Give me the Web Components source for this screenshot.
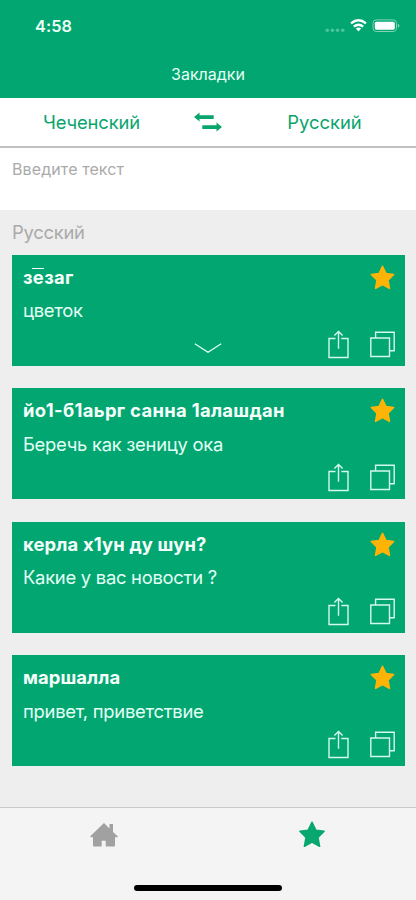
<!DOCTYPE html>
<html lang="ru">
<head>
<meta charset="utf-8">
<title>Закладки</title>
<style>
html,body{margin:0;height:100%}
body{font-family:Inter,"Noto Sans",sans-serif;background:#eee;overflow:hidden}
</style>
</head>
<body>
<bookmarks-app></bookmarks-app>
<script>
const define = (name, html) => {
  const t = document.createElement('template');
  t.innerHTML = html;
  customElements.define(name, class extends HTMLElement {
    constructor() {
      super();
      this.attachShadow({mode: 'open'}).append(t.content.cloneNode(true));
    }
  });
};

define('status-bar', `
<style>
:host{display:flex;height:51px;box-sizing:border-box;padding:0 16px 0 35px;align-items:center;justify-content:space-between;color:#fff}
time{font-size:16.3px;font-weight:600;line-height:20px;letter-spacing:.1px;color:#ecfff7}
svg{display:block}
</style>
<time>4:58</time>
<svg width="76" height="18" viewBox="324 17 76 18" fill="#fff">
  <g fill="#4dc39d"><circle cx="327.2" cy="30.2" r="1.8"/><circle cx="332.4" cy="30.2" r="1.8"/><circle cx="337.6" cy="30.2" r="1.8"/><circle cx="342.8" cy="30.2" r="1.8"/></g>
  <g fill="none" stroke="#fff" stroke-width="2.3"><path d="M351 23.4q7.5-6.2 15 0"/><path d="M353.8 26.6q4.700-3.800 9.400 0"/></g>
  <path d="M355.900 28.600q2.600-2 5.200 0l-2.600 2.800z"/>
  <rect x="373" y="19.900" width="23.500" height="11.600" rx="3.300" fill="none" stroke="#7fd4b6"/>
  <rect x="374.800" y="21.700" width="20" height="8" rx="1.600"/>
  <path d="M397.800 23.700q1.700.6 1.700 2t-1.700 2z" fill="#7fd4b6"/>
</svg>`);

define('nav-title', `
<style>
:host{display:flex;height:46.600px;box-sizing:border-box;padding-bottom:1px;align-items:center;justify-content:center;font-size:16px;line-height:20px;color:#e6fff6}
</style><slot></slot>`);

define('language-switch', `
<style>
:host{display:grid;grid-template-columns:1fr 50px 1fr;height:50.400px;box-sizing:border-box;align-items:center;background:#fff;border-bottom:2px solid #c0c0c0;color:#0aa46d;font-size:18.400px;line-height:24px;text-align:center}
svg{display:block;margin:auto}
</style>
<slot name="from"></slot>
<svg width="28" height="20" viewBox="0 0 28 20" fill="#0aa46d"><path d="M0 5 5.500.5v2.700H19.700v3.700H5.500V9.500zM28 15 22.500 10.500v2.700H8.300v3.700h14.200v2.600z"/></svg>
<slot name="to"></slot>`);

define('search-field', `
<style>
:host{display:block;height:62px;box-sizing:border-box;padding:11px 12px;background:#fff;color:#aaa;font-size:16px;line-height:20px;letter-spacing:.1px}
</style><slot></slot>`);

define('section-label', `
<style>
:host{display:block;height:45px;box-sizing:border-box;padding:10px 12px 0;color:#aaa;font-size:18.400px;line-height:24px;letter-spacing:-.25px}
</style><slot></slot>`);

define('star-icon', `
<style>
:host{display:block;width:25px;height:25px}
svg{display:block;width:100%;height:100%}
</style>
<svg viewBox="0 0 25 25" fill="currentColor" stroke="currentColor" stroke-width="1.500" stroke-linejoin="round"><path d="M12.500 1.200 16 8.500l7.700 1-5.700 5.600 1.500 8.300-7-3.900-7 3.900L7 15.100 1.300 9.500l7.700-1z"/></svg>`);

define('long-vowel', `
<style>
:host{display:inline-block;position:relative}
:host::before{content:"";position:absolute;left:-.5px;right:.5px;top:2.600px;height:1.500px;background:currentColor}
</style><slot></slot>`);

define('entry-card', `
<style>
:host{display:grid;grid-template-columns:1fr auto;grid-template-rows:33px 34px 1fr;height:111px;box-sizing:border-box;margin:0 11.500px;padding:10px 10px 0 11.500px;background:#02a670;color:#e2fff5;font-size:18.400px;line-height:24px}
.term{font-weight:700;color:#f4fffb;white-space:nowrap}
.meaning{grid-column:1/3;white-space:nowrap;letter-spacing:-.27px;padding-top:.4px}
star-icon{color:#ffb405}
.actions{grid-column:1/3;display:grid;grid-template-columns:1fr 28px 1fr;align-items:start}
.tools{display:flex;gap:21px;justify-content:flex-end;margin-top:-3px;grid-column:3}
svg{display:block}
.more{grid-column:2;margin:10px 0 0 -1px;visibility:hidden}
:host([expandable]) .more{visibility:visible}
</style>
<div class="term"><slot name="term"></slot></div>
<star-icon></star-icon>
<div class="meaning"><slot name="meaning"></slot></div>
<div class="actions">
  <svg class="more" width="28" height="12" viewBox="0 0 28 12" fill="none" stroke="#e4fff5" stroke-width="1.200"><path d="M.8 1.800 14 10.300 27.200 1.800"/></svg>
  <div class="tools">
    <svg width="21" height="30" viewBox="0 0 21 30" fill="none" stroke="#d4faed" stroke-width="1.400"><path d="M7.500 9.500H1V28.500H20V9.500H13.300M10.500 19.800V3M6.400 6.600 10.500 2.500l4.100 4.100"/></svg>
    <svg width="25" height="30" viewBox="0 0 25 30" fill="none" stroke="#d4faed" stroke-width="1.400"><path d="M.8 9H19.500V27.500H.8zM5.600 9V3.300H24.200V21.700H19.600"/></svg>
  </div>
</div>`);

define('tab-bar', `
<style>
:host{display:grid;grid-template-columns:1fr 1fr;grid-template-rows:53px 1fr;height:93px;box-sizing:border-box;border-top:1px solid #c9c9c9;background:#f4f4f4;justify-items:center;align-items:center}
star-icon{width:28px;height:27px;color:#07a76f}
svg{display:block}
.handle{grid-column:1/3;align-self:start;margin-top:24px;width:148px;height:5.500px;border-radius:3px;background:#000}
</style>
<svg width="28" height="24" viewBox="0 0 28 24" fill="#a1a1a1"><path d="M14 0 .3 13.300q-.3 1 1 1H3V22.500q0 1 1 1h7.700v-5.700h4V23.500H24q1 0 1-1V14.300h1.700q1.300 0 1-1L23 9V1h-3.500v4.400z"/></svg>
<star-icon></star-icon>
<div class="handle"></div>`);

define('bookmarks-app', `
<style>
:host{display:flex;flex-direction:column;width:416px;height:900px;background:#eee}
header{background:#02a670}
main{display:flex;flex:1;flex-direction:column;gap:22.400px;min-height:0}
</style>
<header><status-bar></status-bar><nav-title><span>Закладки</span></nav-title></header>
<language-switch><span slot="from" style="letter-spacing:-.15px">Чеченский</span><span slot="to">Русский</span></language-switch>
<search-field><span>Введите текст</span></search-field>
<section-label><span>Русский</span></section-label>
<main>
<entry-card expandable><span slot="term" style="letter-spacing:.3px">з<long-vowel>е</long-vowel>заг</span><span slot="meaning">цветок</span></entry-card>
<entry-card><span slot="term" style="letter-spacing:.32px">йо1-б1аьрг санна 1алашдан</span><span slot="meaning">Беречь как зеницу ока</span></entry-card>
<entry-card><span slot="term" style="letter-spacing:.16px">керла х1ун ду шун?</span><span slot="meaning">Какие у вас новости ?</span></entry-card>
<entry-card><span slot="term" style="letter-spacing:.08px">маршалла</span><span slot="meaning">привет, приветствие</span></entry-card>
</main>
<tab-bar></tab-bar>`);
</script>
</body>
</html>
